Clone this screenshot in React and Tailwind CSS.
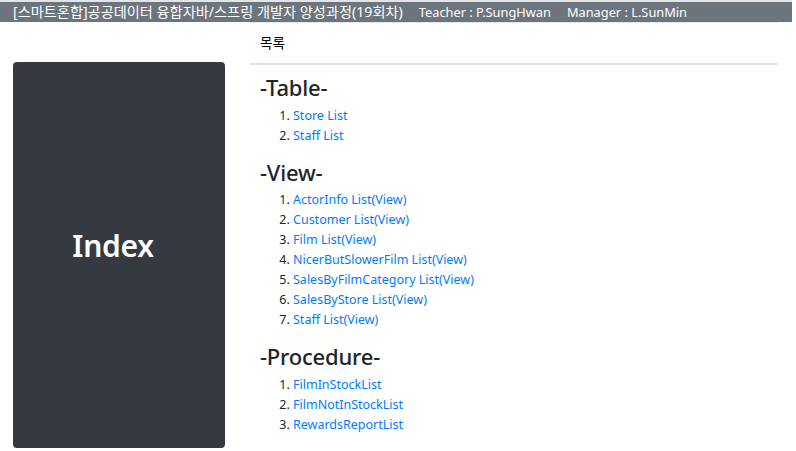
import React from 'react';

const sections = [
  { title: '-Table-', items: ['Store List', 'Staff List'] },
  {
    title: '-View-',
    items: [
      'ActorInfo List(View)',
      'Customer List(View)',
      'Film List(View)',
      'NicerButSlowerFilm List(View)',
      'SalesByFilmCategory List(View)',
      'SalesByStore List(View)',
      'Staff List(View)',
    ],
  },
  { title: '-Procedure-', items: ['FilmInStockList', 'FilmNotInStockList', 'RewardsReportList'] },
  { title: '-내 게시판-', items: ['Board List'] },
];

const font = { fontFamily: '"Noto Sans", "Noto Sans CJK KR", sans-serif' };

export default function App() {
  return (
    <div className="h-[451px] overflow-hidden bg-white text-[#212529]" style={font}>
      {/* top bar */}
      <div className="border-t-2 border-[#e3e5e8] w-[792px]">
        <div className="h-[20px] bg-[#6c757d] text-white leading-[20px] pl-[13px] flex items-baseline gap-[16px] whitespace-nowrap overflow-hidden">
          <span className="text-[14.2px]">[스마트혼합]공공데이터 융합자바/스프링 개발자 양성과정(19회차)</span>
          <span className="text-[12.8px]">Teacher : P.SungHwan</span>
          <span className="text-[12.8px]">Manager : L.SunMin</span>
        </div>
      </div>

      <div className="flex">
        {/* left index panel */}
        <div className="ml-[13px] mt-[40px] w-[212px] h-[386px] shrink-0 rounded bg-[#343a40] flex items-center justify-center pb-[20px] pr-[12px]">
          <span className="text-white text-[30px] font-semibold tracking-[-0.3px]">Index</span>
        </div>

        {/* right content */}
        <div className="ml-[25px] w-[528px] border-t border-[#e5e7ea]">
          <div className="pl-[10px] pt-[9px] h-[40px] text-[13.5px] leading-[22px] text-black">목록</div>
          <div className="h-[2px] bg-[#dee2e6]" />
          <div className="pl-[10px] pt-[8px]">
            {sections.map((s) => (
              <div key={s.title} className="mb-[12px]">
                <h3 className="text-[22px] leading-[28px] font-medium tracking-[-0.2px] mb-[4.5px]">{s.title}</h3>
                <ol className="list-decimal pl-[33px] text-[12.5px] leading-[20px]">
                  {s.items.map((it) => (
                    <li key={it}>
                      <a href="#" className="text-[#007bff]">{it}</a>
                    </li>
                  ))}
                </ol>
              </div>
            ))}
          </div>
        </div>
      </div>
    </div>
  );
}
